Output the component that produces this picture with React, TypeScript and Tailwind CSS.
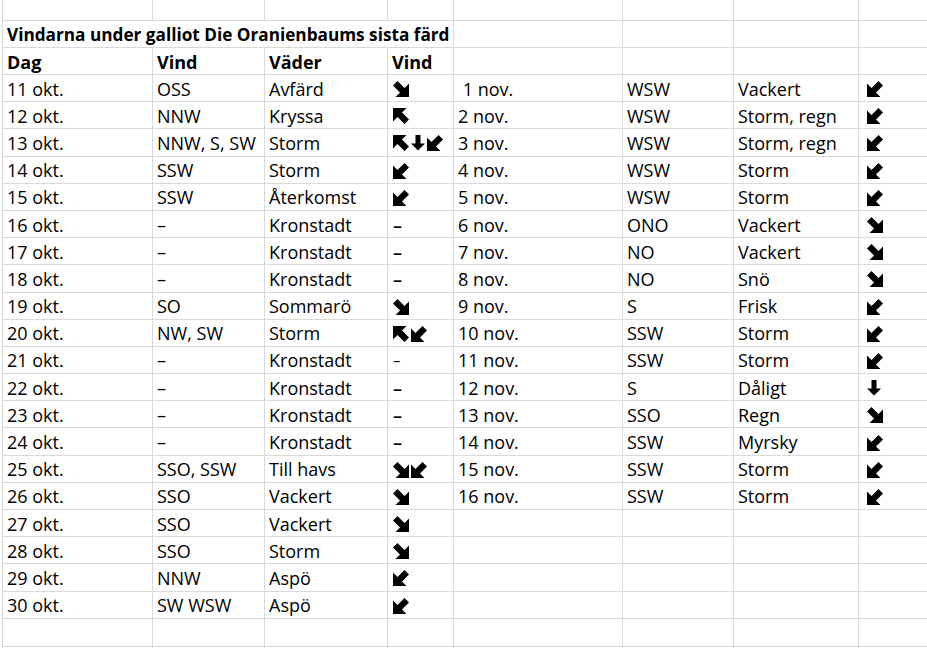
import React from "react";

type Dir = "SE" | "SW" | "NW" | "S" | "-" | "-s";

const left: [string, string, string, Dir[]][] = [
  ["11 okt.", "OSS", "Avfärd", ["SE"]],
  ["12 okt.", "NNW", "Kryssa", ["NW"]],
  ["13 okt.", "NNW, S, SW", "Storm", ["NW", "S", "SW"]],
  ["14 okt.", "SSW", "Storm", ["SW"]],
  ["15 okt.", "SSW", "Återkomst", ["SW"]],
  ["16 okt.", "–", "Kronstadt", ["-"]],
  ["17 okt.", "–", "Kronstadt", ["-"]],
  ["18 okt.", "–", "Kronstadt", ["-"]],
  ["19 okt.", "SO", "Sommarö", ["SE"]],
  ["20 okt.", "NW, SW", "Storm", ["NW", "SW"]],
  ["21 okt.", "–", "Kronstadt", ["-s"]],
  ["22 okt.", "–", "Kronstadt", ["-"]],
  ["23 okt.", "–", "Kronstadt", ["-"]],
  ["24 okt.", "–", "Kronstadt", ["-"]],
  ["25 okt.", "SSO, SSW", "Till havs", ["SE", "SW"]],
  ["26 okt.", "SSO", "Vackert", ["SE"]],
  ["27 okt.", "SSO", "Vackert", ["SE"]],
  ["28 okt.", "SSO", "Storm", ["SE"]],
  ["29 okt.", "NNW", "Aspö", ["SW"]],
  ["30 okt.", "SW WSW", "Aspö", ["SW"]],
];

const right: [string, string, string, Dir][] = [
  [" 1 nov.", "WSW", "Vackert", "SW"],
  ["2 nov.", "WSW", "Storm, regn", "SW"],
  ["3 nov.", "WSW", "Storm, regn", "SW"],
  ["4 nov.", "WSW", "Storm", "SW"],
  ["5 nov.", "WSW", "Storm", "SW"],
  ["6 nov.", "ONO", "Vackert", "SE"],
  ["7 nov.", "NO", "Vackert", "SE"],
  ["8 nov.", "NO", "Snö", "SE"],
  ["9 nov.", "S", "Frisk", "SW"],
  ["10 nov.", "SSW", "Storm", "SW"],
  ["11 nov.", "SSW", "Storm", "SW"],
  ["12 nov.", "S", "Dåligt", "S"],
  ["13 nov.", "SSO", "Regn", "SE"],
  ["14 nov.", "SSW", "Myrsky", "SW"],
  ["15 nov.", "SSW", "Storm", "SW"],
  ["16 nov.", "SSW", "Storm", "SW"],
];

function Arrow({ dir }: { dir: Dir }) {
  if (dir === "-") return <span className="w-[12px] font-semibold">–</span>;
  if (dir === "-s") return <span className="w-[12px] text-[15px] pb-[2px]">–</span>;
  if (dir === "S") {
    return (
      <svg width="14" height="16" viewBox="0 0 14 16" className="shrink-0">
        <path d="M4.5 0H9.5V8.5H14L7 15.5L0 8.5H4.5Z" fill="#000" />
      </svg>
    );
  }
  const rot = dir === "SE" ? 0 : dir === "SW" ? 90 : 180;
  return (
    <svg width="16" height="16" viewBox="0 0 16 16" className="shrink-0">
      <g transform={`rotate(${rot} 8 8)`}>
        <path d="M0 4.5L4.5 0L11.5 7L16 2.5V16H2.5L7 11.5Z" fill="#000" />
      </g>
    </svg>
  );
}

const cell =
  "flex items-center pt-[2px] pl-1 border-r border-[#dadada] overflow-hidden whitespace-nowrap";

function Blank({ h }: { h: string }) {
  return (
    <div className={`flex ${h} border-b border-[#dadada]`}>
      <div className={`${cell} w-[150px]`} />
      <div className={`${cell} w-[112px]`} />
      <div className={`${cell} w-[123px]`} />
      <div className={`${cell} w-[66px]`} />
      <div className={`${cell} w-[169px]`} />
      <div className={`${cell} w-[111px]`} />
      <div className={`${cell} w-[125px]`} />
      <div className={`${cell} w-[69px] border-r-0`} />
    </div>
  );
}

export default function App() {
  return (
    <div
      className="w-[927px] h-[648px] overflow-hidden bg-white text-black text-[18px]"
      style={{ fontFamily: "'Open Sans', Lato, sans-serif" }}
    >
      <div className="flex">
        <div className="w-[3px] shrink-0 border-r border-[#dadada] self-stretch" />
        <div className="flex flex-col">
          <Blank h="h-[21px]" />
          {/* title */}
          <div className="flex h-[27px] border-b border-[#dadada]">
            <div className={`${cell} w-[451px] font-bold text-[17.2px]`}>
              Vindarna under galliot Die Oranienbaums sista färd
            </div>
            <div className={`${cell} w-[169px]`} />
            <div className={`${cell} w-[111px]`} />
            <div className={`${cell} w-[125px]`} />
            <div className={`${cell} w-[69px] border-r-0`} />
          </div>
          {/* header */}
          <div className="flex h-[27px] border-b border-[#dadada] font-bold">
            <div className={`${cell} w-[150px]`}>Dag</div>
            <div className={`${cell} w-[112px]`}>Vind</div>
            <div className={`${cell} w-[123px]`}>Väder</div>
            <div className={`${cell} w-[66px]`}>Vind</div>
            <div className={`${cell} w-[169px]`} />
            <div className={`${cell} w-[111px]`} />
            <div className={`${cell} w-[125px]`} />
            <div className={`${cell} w-[69px] border-r-0`} />
          </div>
          {left.map((l, i) => {
            const r = right[i];
            return (
              <div key={l[0]} className="flex h-[27.2px] border-b border-[#dadada]">
                <div className={`${cell} w-[150px]`}>{l[0]}</div>
                <div className={`${cell} w-[112px]`}>{l[1]}</div>
                <div className={`${cell} w-[123px]`}>{l[2]}</div>
                <div className={`${cell} w-[66px] gap-[2px] pl-[5px]`}>
                  {l[3].map((d, k) => (
                    <Arrow key={k} dir={d} />
                  ))}
                </div>
                <div className={`${cell} w-[169px] whitespace-pre`}>{r ? r[0] : ""}</div>
                <div className={`${cell} w-[111px]`}>{r ? r[1] : ""}</div>
                <div className={`${cell} w-[125px]`}>{r ? r[2] : ""}</div>
                <div className={`${cell} w-[69px] border-r-0 pl-2`}>
                  {r ? <Arrow dir={r[3]} /> : null}
                </div>
              </div>
            );
          })}
          <div className="flex h-[28px] border-b border-[#dadada]">
            <div className={`${cell} w-[150px] relative`}>
              <div className="absolute left-[-2px] top-[2px] bottom-[1px] w-[2px] bg-[#217346]" />
            </div>
            <div className={`${cell} w-[112px]`} />
            <div className={`${cell} w-[123px]`} />
            <div className={`${cell} w-[66px]`} />
            <div className={`${cell} w-[169px]`} />
            <div className={`${cell} w-[111px]`} />
            <div className={`${cell} w-[125px]`} />
            <div className={`${cell} w-[69px] border-r-0`} />
          </div>
          <Blank h="h-[10px]" />
        </div>
      </div>
    </div>
  );
}
